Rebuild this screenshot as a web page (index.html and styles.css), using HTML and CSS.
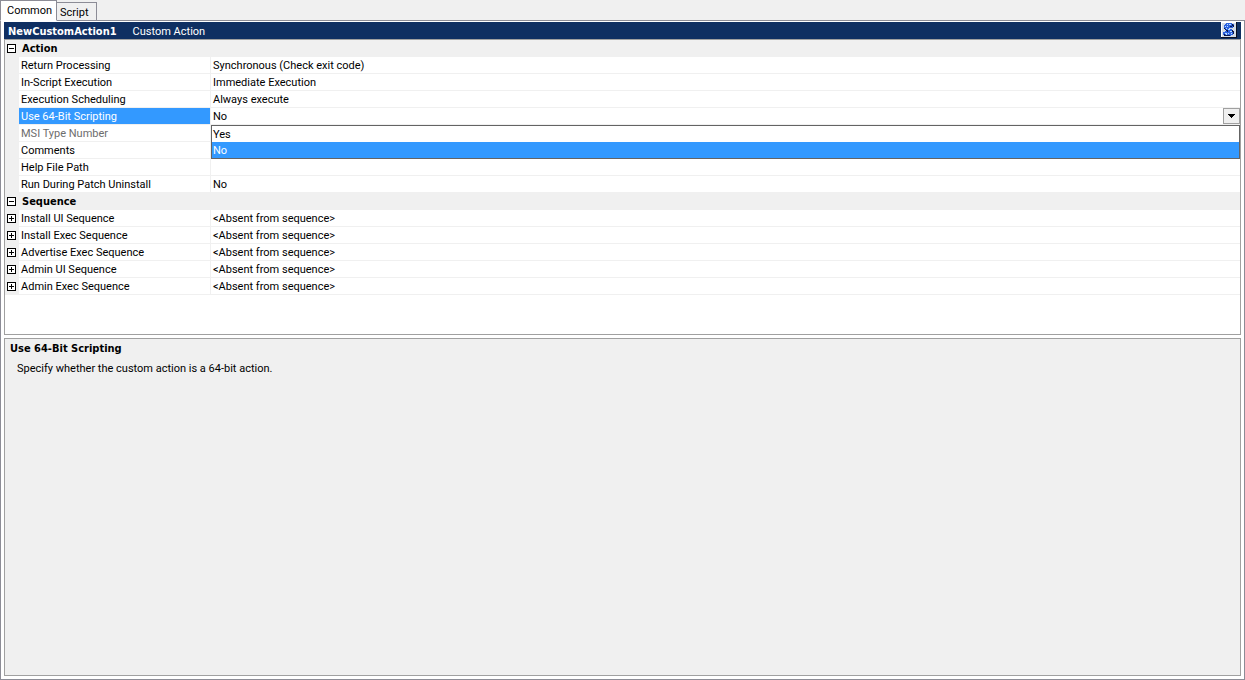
FILE: index.html
```html
<!DOCTYPE html>
<html lang="en">
<head>
    <meta charset="UTF-8">
    <meta name="viewport" content="width=device-width, initial-scale=1.0">
    <title>NewCustomAction1</title>
    <link rel="stylesheet" href="styles.css">
</head>
<body>
    <div class="tabs" role="tablist">
        <button type="button" class="tab active" role="tab" aria-selected="true">Common</button>
        <button type="button" class="tab" role="tab" aria-selected="false">Script</button>
    </div>

    <main class="page">
        <header class="title-bar">
            <h1>NewCustomAction1</h1>
            <span>Custom Action</span>
            <button type="button" class="script-button" aria-label="View script">
                <svg width="16" height="16" viewBox="0 0 16 16" shape-rendering="crispEdges">
                    <rect width="16" height="16" fill="#0a0f20"/>
                    <rect width="15" height="15" fill="#d4dce6"/>
                    <path d="M0 0h15v1H1v14H0z" fill="#fff"/>
                    <path d="M5 1h6v1h2v3h-1v1H8v1h3v1h1v1h1v3h-1v1h-2v1H3v-1H2v-3h2v-1h2V9H5V8H4V7H3V3h1V2h1z" fill="#2c62e0"/>
                    <path d="M6 2h1v1H6zM8 2h2v1H8zM4 4h1v1H4zM6 4h1v1H6zM5 6h1v1H5zM7 7h2v1H7zM9 9h2v1H9zM4 11h2v1H4zM7 11h1v1H7zM10 11h1v1h-1zM5 12h1v1H5z" fill="#b8dcff"/>
                    <path d="M11 2h1v1h1v2h-1V4h-1zM3 6h1v1h1v1h2v1H5V8H4V7H3zM11 8h1v1h1v3h-1v-2h-1zM3 12h1v1h5v1H3zM9 4h2v1H9zM6 9h1v1H6z" fill="#081850"/>
                </svg>
            </button>
        </header>

        <div class="grid-panel">
            <table class="grid">
                <colgroup>
                    <col class="col-gutter">
                    <col class="col-name">
                    <col>
                </colgroup>
                <tbody>
                    <tr class="section">
                        <td><button type="button" class="expander" aria-label="Collapse Action"></button></td>
                        <th colspan="2">Action</th>
                    </tr>
                    <tr>
                        <td></td>
                        <th>Return Processing</th>
                        <td>Synchronous (Check exit code)</td>
                    </tr>
                    <tr>
                        <td></td>
                        <th>In-Script Execution</th>
                        <td>Immediate Execution</td>
                    </tr>
                    <tr>
                        <td></td>
                        <th>Execution Scheduling</th>
                        <td>Always execute</td>
                    </tr>
                    <tr class="selected">
                        <td></td>
                        <th><label for="scripting">Use 64-Bit Scripting</label></th>
                        <td class="editor">
                            <div class="combo">
                                <select id="scripting">
                                    <option>Yes</option>
                                    <option selected>No</option>
                                </select>
                                <span class="arrow">
                                    <svg width="7" height="4" viewBox="0 0 7 4" shape-rendering="crispEdges">
                                        <path d="M0 0h7v1H6v1H5v1H4v1H3V3H2V2H1V1H0z"/>
                                    </svg>
                                </span>
                                <ul class="options" role="listbox" aria-label="Use 64-Bit Scripting">
                                    <li role="option" aria-selected="false">Yes</li>
                                    <li class="current" role="option" aria-selected="true">No</li>
                                </ul>
                            </div>
                        </td>
                    </tr>
                    <tr class="disabled">
                        <td></td>
                        <th>MSI Type Number</th>
                        <td></td>
                    </tr>
                    <tr>
                        <td></td>
                        <th>Comments</th>
                        <td></td>
                    </tr>
                    <tr>
                        <td></td>
                        <th>Help File Path</th>
                        <td></td>
                    </tr>
                    <tr>
                        <td></td>
                        <th>Run During Patch Uninstall</th>
                        <td>No</td>
                    </tr>
                    <tr class="section">
                        <td><button type="button" class="expander" aria-label="Collapse Sequence"></button></td>
                        <th colspan="2">Sequence</th>
                    </tr>
                    <tr>
                        <td><button type="button" class="expander closed" aria-label="Expand Install UI Sequence"></button></td>
                        <th>Install UI Sequence</th>
                        <td>&lt;Absent from sequence&gt;</td>
                    </tr>
                    <tr>
                        <td><button type="button" class="expander closed" aria-label="Expand Install Exec Sequence"></button></td>
                        <th>Install Exec Sequence</th>
                        <td>&lt;Absent from sequence&gt;</td>
                    </tr>
                    <tr>
                        <td><button type="button" class="expander closed" aria-label="Expand Advertise Exec Sequence"></button></td>
                        <th>Advertise Exec Sequence</th>
                        <td>&lt;Absent from sequence&gt;</td>
                    </tr>
                    <tr>
                        <td><button type="button" class="expander closed" aria-label="Expand Admin UI Sequence"></button></td>
                        <th>Admin UI Sequence</th>
                        <td>&lt;Absent from sequence&gt;</td>
                    </tr>
                    <tr>
                        <td><button type="button" class="expander closed" aria-label="Expand Admin Exec Sequence"></button></td>
                        <th>Admin Exec Sequence</th>
                        <td>&lt;Absent from sequence&gt;</td>
                    </tr>
                </tbody>
            </table>
        </div>

        <section class="help">
            <h2>Use 64-Bit Scripting</h2>
            <p>Specify whether the custom action is a 64-bit action.</p>
        </section>
    </main>
</body>
</html>
```

FILE: styles.css
```css
* {
    box-sizing: border-box;
}

body {
    margin: 0;
    min-height: 100vh;
    display: flex;
    flex-direction: column;
    background: #f0f0f0;
    color: #000;
    font-family: Tahoma, Roboto, sans-serif;
    font-size: 11px;
    line-height: 16px;
}

button,
select {
    margin: 0;
    padding: 0;
    border: none;
    border-radius: 0;
    background: none;
    color: inherit;
    font: inherit;
}

h1,
h2,
p,
ul {
    margin: 0;
    padding: 0;
    font-size: 11px;
}

h1,
h2,
.grid .section th {
    font-family: Tahoma, "DejaVu Sans Condensed", sans-serif;
    font-weight: bold;
    line-height: 18px;
}

/* Tabs */
.tabs {
    display: flex;
    align-items: flex-end;
    height: 21px;
}

.tab {
    height: 19px;
    padding: 2px 7px 0 3px;
    border: 1px solid #8c8c96;
    border-left: none;
    background: #f0f0f0;
}

.tab.active {
    position: relative;
    height: 21px;
    padding: 0 4px 0 6px;
    border-left: 1px solid #8c8c96;
    border-bottom-color: #fff;
    background: #fff;
}

/* The frame's top line runs under the tabs */
.page {
    flex: 1;
    display: flex;
    flex-direction: column;
    margin-top: -1px;
    padding: 1px 3px 3px;
    border: 1px solid #8c8c96;
    background: #fff;
}

.title-bar {
    display: flex;
    align-items: flex-start;
    gap: 16px;
    height: 17px;
    padding: 0 4px;
    background: #0f2f62;
    color: #fff;
    line-height: 19px;
}

.title-bar h1 {
    line-height: 19px;
}

.script-button {
    height: 16px;
    margin-left: auto;
}

.script-button svg {
    display: block;
}

/* Property grid */
.grid-panel {
    padding-bottom: 39px;
    border: 1px solid #a0a0a0;
}

.grid {
    width: 100%;
    table-layout: fixed;
    border-spacing: 0;
}

.col-gutter {
    width: 14px;
}

.col-name {
    width: 192px;
}

.grid td,
.grid th {
    height: 17px;
    padding: 2px 2px 0;
    border-bottom: 1px solid #f0f0f0;
    font-weight: normal;
    text-align: left;
    line-height: 14px;
    white-space: nowrap;
}

.grid th {
    border-right: 1px solid #f0f0f0;
}

.grid td:first-child {
    padding-top: 0;
    background: #f0f0f0;
}

.grid .section th {
    padding: 0 3px;
    border: none;
    background: #f0f0f0;
    font-weight: bold;
    line-height: 17px;
}

.grid .selected th {
    background: #3399ff;
    background-clip: padding-box;
    color: #fff;
}

.grid .disabled th {
    color: #6d6d6d;
}

.grid .editor {
    padding: 0;
}

.expander {
    display: block;
    width: 9px;
    height: 9px;
    border: 1px solid #000;
    background: linear-gradient(#000, #000) center / 5px 1px no-repeat #fff;
}

.expander.closed {
    background:
        linear-gradient(#000, #000) center / 5px 1px no-repeat,
        linear-gradient(#000, #000) center / 1px 5px no-repeat #fff;
}

.combo {
    position: relative;
    display: flex;
}

.combo select {
    flex: 1;
    height: 16px;
    padding: 2px 2px 0;
    appearance: none;
    outline: none;
}

.arrow {
    display: flex;
    align-items: center;
    justify-content: center;
    width: 17px;
    height: 16px;
    border: 1px solid #a0a0a0;
    background: #f0f0f0;
    pointer-events: none;
}

.options {
    position: absolute;
    z-index: 1;
    top: 100%;
    left: 0;
    right: 0;
    margin-top: 1px;
    border: 1px solid #646464;
    background: #fff;
    list-style: none;
}

.options li {
    padding: 2px 1px 0;
}

.options .current {
    background: #3399ff;
    color: #fff;
}

/* Help text for the selected property */
.help {
    flex: 1;
    margin-top: 3px;
    padding: 1px 5px;
    border: 1px solid #a0a0a0;
    background: #f0f0f0;
}

.help p {
    padding: 3px 7px;
}
```
